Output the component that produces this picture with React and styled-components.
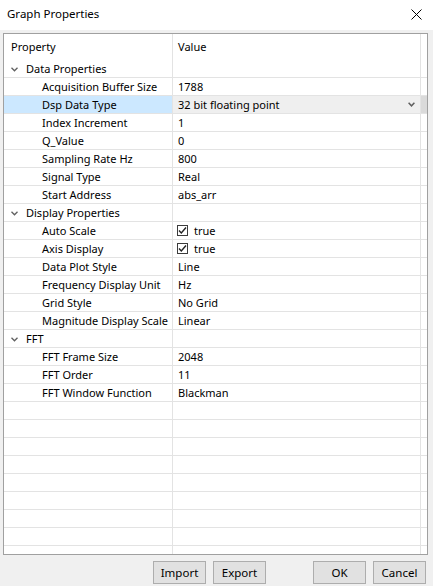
import React from "react";
import styled, { createGlobalStyle } from "styled-components";

const Global = createGlobalStyle`
  html, body { margin: 0; padding: 0; background: #f0f0f0; }
  body { font-family: "Noto Sans", "Open Sans", sans-serif; font-size: 11px; color: #000; }
  * { box-sizing: border-box; }
`;

const Window = styled.div`
  width: 433px;
  height: 586px;
  display: flex;
  flex-direction: column;
  overflow: hidden;
`;

const TitleBar = styled.div`
  height: 30px;
  background: #fff;
  display: flex;
  align-items: center;
  justify-content: space-between;
  padding: 0 11px 2px 7px;
  font-size: 11.5px;
`;

const Title = styled.span`
  line-height: 16px;
`;

const CloseIcon = styled.svg`
  width: 11px;
  height: 11px;
  display: block;
`;

const Body = styled.div`
  flex: 1;
  background: #f0f0f0;
  display: flex;
  flex-direction: column;
  padding: 3px 5px 2px 3px;
  min-height: 0;
`;

const GridBox = styled.div`
  flex: 1;
  min-height: 0;
  border: 1px solid #a0a0a0;
  background: #fff;
  overflow: hidden;
`;

const Row = styled.div`
  display: grid;
  grid-template-columns: 169px 248px 6px;
  height: ${(p) => (p.$header ? "26px" : "18px")};
  border-bottom: ${(p) => (p.$header ? "none" : "1px solid #e3e3e3")};
`;

const Cell = styled.div`
  display: flex;
  align-items: center;
  border-right: ${(p) => (p.$last ? "none" : "1px solid #e3e3e3")};
  padding-left: ${(p) => p.$pad || 0}px;
  background: ${(p) => p.$bg || "transparent"};
  white-space: nowrap;
  overflow: hidden;
  line-height: 16px;
  position: relative;
`;

const Chevron = styled.svg`
  width: 7px;
  height: 5px;
  display: block;
  margin-right: 8px;
  margin-top: 1px;
`;

const DropButton = styled.div`
  position: absolute;
  right: 0;
  top: 0;
  bottom: 0;
  width: 17px;
  display: flex;
  align-items: center;
  justify-content: center;
`;

const Check = styled.span`
  width: 11px;
  height: 11px;
  border: 1px solid #3c3c3c;
  background: #fff;
  display: inline-flex;
  align-items: center;
  justify-content: center;
  margin-right: 6px;
  margin-left: -1px;
`;

const ButtonBar = styled.div`
  display: flex;
  justify-content: flex-end;
  margin-top: 6px;
  padding-right: 2px;
  gap: 7px;
`;

const Spacer = styled.div`
  width: 33px;
`;

const Button = styled.button`
  width: 53px;
  height: 23px;
  background: #e1e1e1;
  border: 1px solid #adadad;
  font-family: inherit;
  font-size: 11.5px;
  color: #000;
  padding: 0 0 1px;
  margin: 0;
`;

const sections = [
  {
    title: "Data Properties",
    items: [
      { name: "Acquisition Buffer Size", value: "1788" },
      { name: "Dsp Data Type", value: "32 bit floating point", selected: true },
      { name: "Index Increment", value: "1" },
      { name: "Q_Value", value: "0" },
      { name: "Sampling Rate Hz", value: "800" },
      { name: "Signal Type", value: "Real" },
      { name: "Start Address", value: "abs_arr" },
    ],
  },
  {
    title: "Display Properties",
    items: [
      { name: "Auto Scale", value: "true", check: true },
      { name: "Axis Display", value: "true", check: true },
      { name: "Data Plot Style", value: "Line" },
      { name: "Frequency Display Unit", value: "Hz" },
      { name: "Grid Style", value: "No Grid" },
      { name: "Magnitude Display Scale", value: "Linear" },
    ],
  },
  {
    title: "FFT",
    items: [
      { name: "FFT Frame Size", value: "2048" },
      { name: "FFT Order", value: "11" },
      { name: "FFT Window Function", value: "Blackman" },
    ],
  },
];

const DownChevron = ({ color = "#5f5f5f" }) => (
  <Chevron viewBox="0 0 7 5">
    <path d="M0.5 0.8 L3.5 3.8 L6.5 0.8" fill="none" stroke={color} strokeWidth="1.3" />
  </Chevron>
);

export default function App() {
  const empties = Array.from({ length: 10 });
  return (
    <>
      <Global />
      <Window>
        <TitleBar>
          <Title>Graph Properties</Title>
          <CloseIcon viewBox="0 0 11 11">
            <path d="M0.5 0.5 L10.5 10.5 M10.5 0.5 L0.5 10.5" stroke="#000" strokeWidth="1" fill="none" />
          </CloseIcon>
        </TitleBar>
        <Body>
          <GridBox>
            <Row $header>
              <Cell $pad={7}>Property</Cell>
              <Cell $pad={5}>Value</Cell>
              <Cell $last />
            </Row>
            {sections.map((s) => (
              <React.Fragment key={s.title}>
                <Row>
                  <Cell $pad={7}>
                    <DownChevron />
                    {s.title}
                  </Cell>
                  <Cell />
                  <Cell $last />
                </Row>
                {s.items.map((it) => (
                  <Row key={it.name}>
                    <Cell $pad={38} $bg={it.selected ? "#cce8ff" : undefined}>
                      {it.name}
                    </Cell>
                    <Cell $pad={5} $bg={it.selected ? "#efefef" : undefined}>
                      {it.check && (
                        <Check>
                          <svg width="9" height="9" viewBox="0 0 9 9">
                            <path d="M1 4.5 L3.3 7 L8 1.5" fill="none" stroke="#222" strokeWidth="1.4" />
                          </svg>
                        </Check>
                      )}
                      {it.value}
                      {it.selected && (
                        <DropButton>
                          <svg width="7" height="5" viewBox="0 0 7 5">
                            <path d="M0.6 0.8 L3.5 3.8 L6.4 0.8" fill="none" stroke="#5f5f5f" strokeWidth="1.5" />
                          </svg>
                        </DropButton>
                      )}
                    </Cell>
                    <Cell $last $bg={it.selected ? "#dadada" : undefined} />
                  </Row>
                ))}
              </React.Fragment>
            ))}
            {empties.map((_, i) => (
              <Row key={"e" + i}>
                <Cell />
                <Cell />
                <Cell $last />
              </Row>
            ))}
          </GridBox>
          <ButtonBar>
            <Button>Import</Button>
            <Button>Export</Button>
            <Spacer />
            <Button>OK</Button>
            <Button>Cancel</Button>
          </ButtonBar>
        </Body>
      </Window>
    </>
  );
}
